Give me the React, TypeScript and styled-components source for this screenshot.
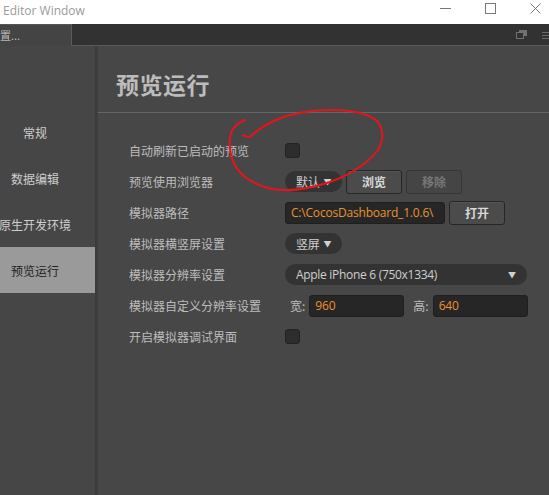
import React from "react";
import styled, { createGlobalStyle } from "styled-components";

const Global = createGlobalStyle`
  html, body { margin: 0; padding: 0; background: #474747; overflow: hidden; }
  body { font-family: "Open Sans", "Noto Sans CJK SC", sans-serif; }
  #root { width: 549px; height: 495px; }
`;

const Page = styled.div`
  position: relative;
  width: 549px;
  height: 495px;
  display: flex;
  flex-direction: column;
  background: #474747;
  overflow: hidden;
`;

const TitleBar = styled.div`
  height: 24px;
  flex: none;
  background: #ffffff;
  display: flex;
  align-items: center;
  padding-left: 3px;
`;

const TitleText = styled.div`
  flex: 1;
  font-family: "Open Sans", "Noto Sans", sans-serif;
  font-size: 12px;
  color: #9a9a9a;
  padding-bottom: 4px;
`;

const WinButtons = styled.div`
  display: flex;
  align-items: flex-start;
  align-self: flex-start;
  gap: 34px;
  padding: 3px 8px 0 0;
`;

const TabBar = styled.div`
  height: 22px;
  flex: none;
  display: flex;
  background: #323232;
`;

const Tab = styled.div`
  width: 71px;
  background: #444444;
  border-top: 1px solid #555;
  box-sizing: border-box;
  font-family: "Noto Sans CJK SC", sans-serif;
  font-size: 11px;
  color: #b5b5b5;
  line-height: 20px;
  overflow: hidden;
  white-space: nowrap;
`;

const TabStrip = styled.div`
  flex: 1;
  border-bottom: 1px solid #5a5a5a;
  border-left: 1px solid #5a5a5a;
  display: flex;
  justify-content: flex-end;
  align-items: center;
  gap: 15px;
  margin-right: -3px;
`;

const Main = styled.div`
  flex: 1;
  display: flex;
  min-height: 0;
`;

const Sidebar = styled.div`
  width: 95px;
  flex: none;
  background: #464646;
  padding-top: 63px;
  box-sizing: border-box;
  display: flex;
  flex-direction: column;
`;

const NavItem = styled.div<{ $active?: boolean }>`
  height: 46px;
  display: flex;
  align-items: center;
  background: ${(p) => (p.$active ? "#9a9a9a" : "transparent")};
  color: ${(p) => (p.$active ? "#1e1e1e" : "#cfcfcf")};
  font-family: "Noto Sans CJK SC", sans-serif;
  font-size: 12px;
`;

const NavLabel = styled.span`
  width: 70px;
  text-align: center;
  white-space: nowrap;
  display: flex;
  justify-content: center;
`;

const Split = styled.div`
  width: 3px;
  flex: none;
  background: linear-gradient(to right, #3a3a3a, #404040);
`;

const Content = styled.div`
  flex: 1;
  display: flex;
  flex-direction: column;
  background: #474747;
`;

const Header = styled.div`
  height: 67px;
  flex: none;
  display: flex;
  align-items: center;
  padding-left: 18px;
  border-bottom: 1px solid #666;
  box-sizing: border-box;
`;

const Title = styled.h1`
  margin: 0;
  padding-top: 9px;
  font-family: "Noto Sans CJK SC", sans-serif;
  font-size: 23px;
  font-weight: 700;
  color: #bcbcbc;
  letter-spacing: 0.5px;
`;

const Form = styled.div`
  padding: 22px 0 0 31px;
  display: flex;
  flex-direction: column;
`;

const Row = styled.div`
  height: 31px;
  display: flex;
  align-items: center;
`;

const Label = styled.div`
  width: 156px;
  flex: none;
  font-family: "Noto Sans CJK SC", sans-serif;
  font-size: 12px;
  color: #bdbdbd;
  white-space: nowrap;
`;

const Controls = styled.div<{ $gap?: number }>`
  display: flex;
  align-items: center;
  gap: ${(p) => (p.$gap ?? 4)}px;
`;

const Check = styled.div`
  width: 15px;
  height: 15px;
  box-sizing: border-box;
  background: #2d2d2d;
  border: 1px solid #222;
  border-radius: 3px;
`;

const Pill = styled.div<{ $w: number }>`
  width: ${(p) => p.$w}px;
  height: 21px;
  box-sizing: border-box;
  border-radius: 11px;
  background: #333333;
  display: flex;
  align-items: center;
  padding: 0 11px 0 11px;
  gap: 4px;
  font-family: "Open Sans", "Noto Sans CJK SC", sans-serif;
  font-size: 12px;
  color: #cfcfcf;
  white-space: nowrap;
`;

const PillText = styled.span`
  flex: 1;
  letter-spacing: -0.3px;
`;

const Arrow = styled.span`
  font-size: 8px;
  color: #d0d0d0;
`;

const Button = styled.div<{ $disabled?: boolean }>`
  width: 56px;
  height: 24px;
  box-sizing: border-box;
  border: 1px solid ${(p) => (p.$disabled ? "#363636" : "#262626")};
  border-radius: 3px;
  background: ${(p) => (p.$disabled ? "#454545" : "#4b4b4b")};
  box-shadow: ${(p) => (p.$disabled ? "none" : "inset 0 1px 0 #555")};
  display: flex;
  align-items: center;
  justify-content: center;
  font-family: "Noto Sans CJK SC", sans-serif;
  font-size: 12px;
  font-weight: 700;
  color: ${(p) => (p.$disabled ? "#777" : "#d8d8d8")};
`;

const Input = styled.div<{ $w: number }>`
  width: ${(p) => p.$w}px;
  height: 22px;
  box-sizing: border-box;
  background: #262626;
  border: 1px solid #1f1f1f;
  border-radius: 3px;
  padding-left: 5px;
  display: flex;
  align-items: center;
  overflow: hidden;
  white-space: nowrap;
  font-family: "Open Sans", sans-serif;
  font-size: 12px;
  letter-spacing: -0.2px;
  color: #ea922f;
`;

const SizeLabel = styled.span<{ $ml: number }>`
  margin-left: ${(p) => p.$ml}px;
  margin-right: 4px;
  font-family: "Noto Sans CJK SC", sans-serif;
  font-size: 12px;
  color: #bdbdbd;
`;

const Annotation = styled.svg`
  position: absolute;
  left: 0;
  top: 0;
  pointer-events: none;
`;

export default function App() {
  return (
    <Page>
      <Global />
      <TitleBar>
        <TitleText>Editor Window</TitleText>
        <WinButtons>
          <svg width="11" height="11" viewBox="0 0 11 11">
            <line x1="0" y1="5.5" x2="11" y2="5.5" stroke="#777" strokeWidth="1" />
          </svg>
          <svg width="11" height="11" viewBox="0 0 11 11">
            <rect x="0.5" y="0.5" width="10" height="10" fill="none" stroke="#777" strokeWidth="1" />
          </svg>
          <svg width="11" height="11" viewBox="0 0 11 11">
            <path d="M0.5 0.5 L10.5 10.5 M10.5 0.5 L0.5 10.5" stroke="#777" strokeWidth="1" />
          </svg>
        </WinButtons>
      </TitleBar>
      <TabBar>
        <Tab>置...</Tab>
        <TabStrip>
          <svg width="11" height="9" viewBox="0 0 11 9">
            <rect x="3" y="0" width="8" height="6" fill="#707070" />
            <rect x="0.5" y="2.5" width="7" height="6" fill="#323232" stroke="#707070" />
          </svg>
          <svg width="10" height="8" viewBox="0 0 10 8">
            <path d="M0 1.5 H10 M0 4.5 H10 M0 7.5 H10" stroke="#6a6a6a" strokeWidth="1" />
          </svg>
        </TabStrip>
      </TabBar>
      <Main>
        <Sidebar>
          <NavItem><NavLabel>常规</NavLabel></NavItem>
          <NavItem><NavLabel>数据编辑</NavLabel></NavItem>
          <NavItem><NavLabel>原生开发环境</NavLabel></NavItem>
          <NavItem $active><NavLabel>预览运行</NavLabel></NavItem>
        </Sidebar>
        <Split />
        <Content>
          <Header>
            <Title>预览运行</Title>
          </Header>
          <Form>
            <Row>
              <Label>自动刷新已启动的预览</Label>
              <Controls><Check /></Controls>
            </Row>
            <Row>
              <Label>预览使用浏览器</Label>
              <Controls>
                <Pill $w={57}><PillText>默认</PillText><Arrow>▼</Arrow></Pill>
                <Button>浏览</Button>
                <Button $disabled>移除</Button>
              </Controls>
            </Row>
            <Row>
              <Label>模拟器路径</Label>
              <Controls>
                <Input $w={160}>C:\CocosDashboard_1.0.6\</Input>
                <Button>打开</Button>
              </Controls>
            </Row>
            <Row>
              <Label>模拟器横竖屏设置</Label>
              <Controls>
                <Pill $w={57}><PillText>竖屏</PillText><Arrow>▼</Arrow></Pill>
              </Controls>
            </Row>
            <Row>
              <Label>模拟器分辨率设置</Label>
              <Controls>
                <Pill $w={242}><PillText>Apple iPhone 6 (750x1334)</PillText><Arrow>▼</Arrow></Pill>
              </Controls>
            </Row>
            <Row>
              <Label>模拟器自定义分辨率设置</Label>
              <Controls $gap={0}>
                <SizeLabel $ml={5}>宽:</SizeLabel>
                <Input $w={95}>960</Input>
                <SizeLabel $ml={9}>高:</SizeLabel>
                <Input $w={95}>640</Input>
              </Controls>
            </Row>
            <Row>
              <Label>开启模拟器调试界面</Label>
              <Controls><Check /></Controls>
            </Row>
          </Form>
        </Content>
      </Main>
      <Annotation width="549" height="495" viewBox="0 0 549 495">
        <path
          d="M245 120 C238 123 233 127 231 133 C228 143 230 157 236 167 C243 178 255 185 272 189 C290 192 312 188 330 182 C350 175 368 163 378 150 C384 140 384 128 376 120 C366 113 350 110 332 110 C312 110 292 113 276 120 C265 125 256 131 250 137 C247 137 245 136 243 135"
          fill="none"
          stroke="#e8141a"
          strokeWidth="2"
          strokeLinecap="round"
        />
      </Annotation>
    </Page>
  );
}
